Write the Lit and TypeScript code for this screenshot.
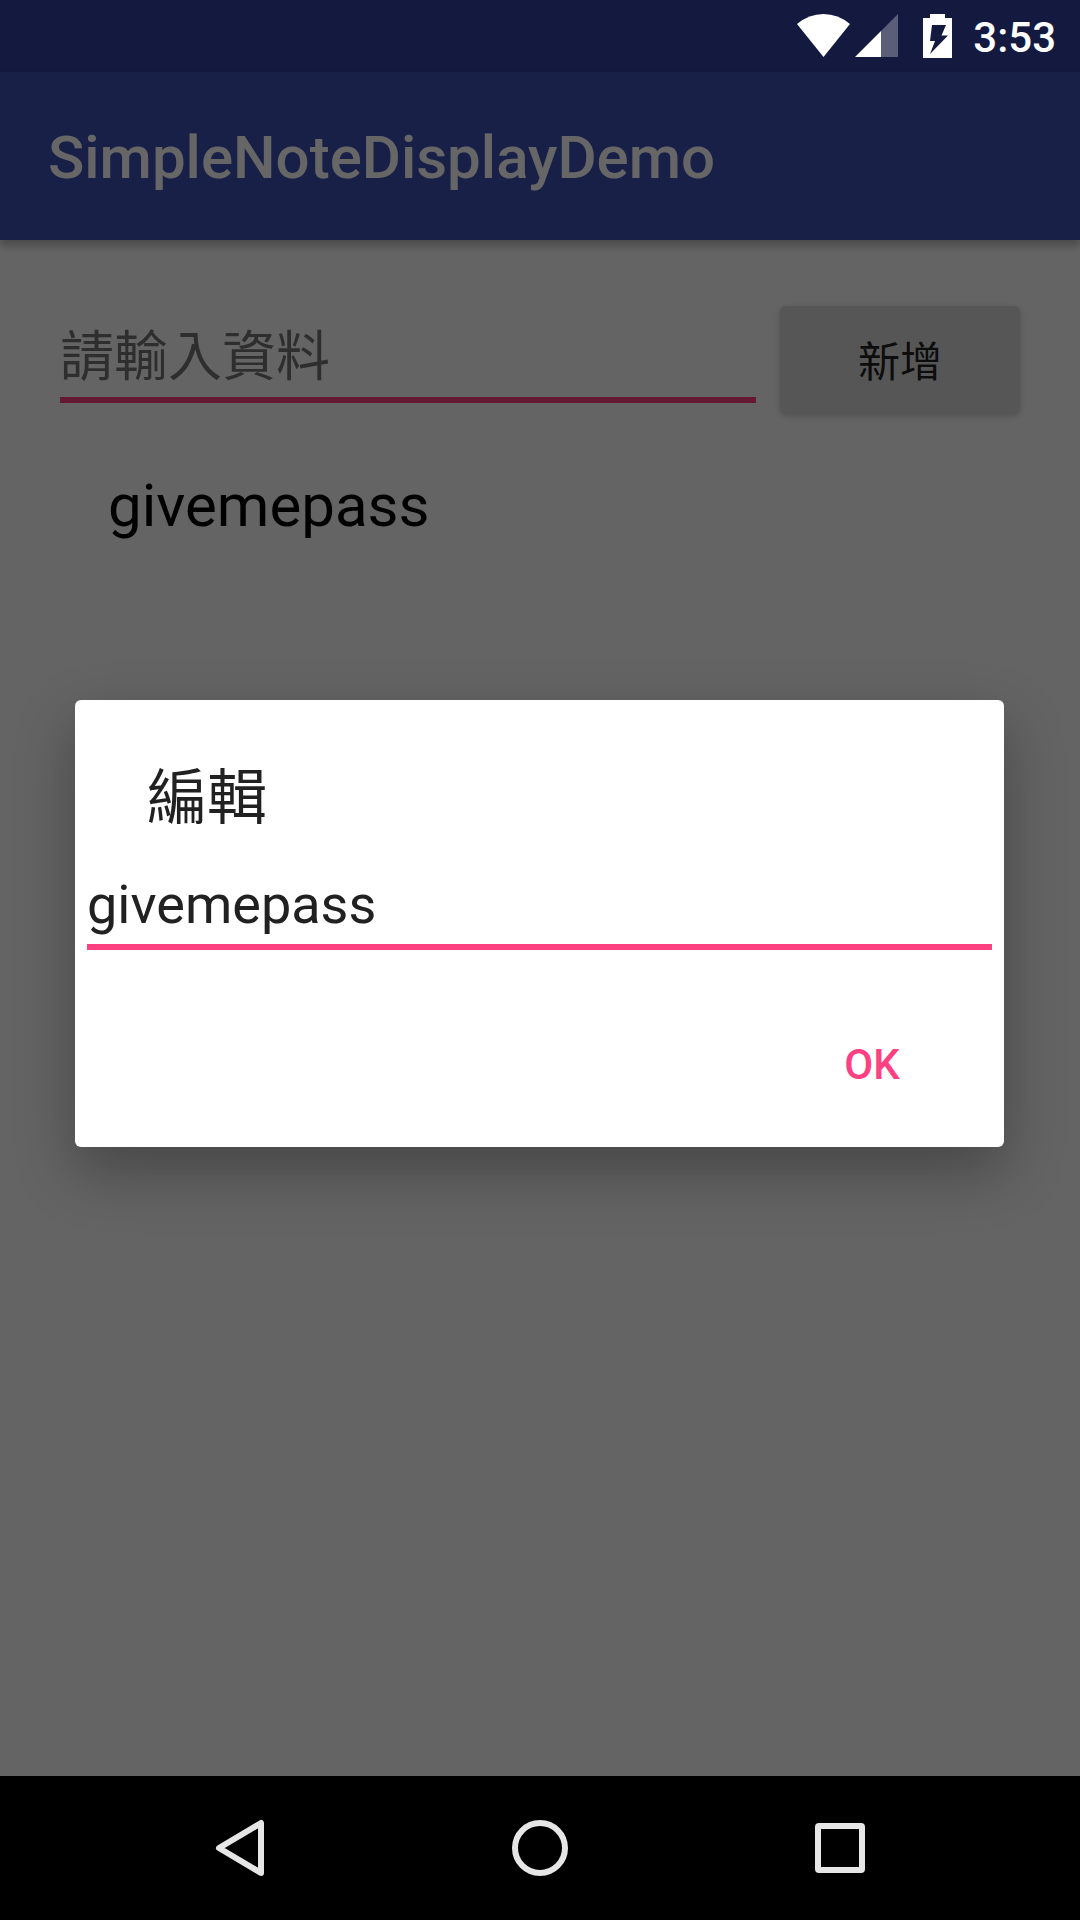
import { LitElement, html, css } from "lit";
import { customElement, state } from "lit/decorators.js";

@customElement("app-root")
export class AppRoot extends LitElement {
  @state() private notes = ["givemepass"];
  @state() private draft = "";

  static styles = css`
    :host {
      display: block;
      font-family: Roboto, "Noto Sans CJK TC", sans-serif;
      color: #000;
    }
    * {
      box-sizing: border-box;
    }
    .screen {
      display: flex;
      flex-direction: column;
      min-height: 100vh;
      background: #fafafa;
    }
    .stage {
      position: relative;
      flex: 1;
      display: flex;
      flex-direction: column;
    }
    .status {
      display: flex;
      justify-content: flex-end;
      align-items: center;
      height: 72px;
      padding-right: 24px;
      background: #303f9f;
    }
    .indicators {
      position: relative;
      z-index: 2;
      display: flex;
      align-items: center;
      gap: 2px;
      color: #fff;
      font-size: 42px;
      font-weight: 500;
      line-height: 48px;
    }
    .indicators svg {
      display: block;
      height: 48px;
    }
    .clock {
      padding-top: 4px;
    }
    .appbar {
      display: flex;
      align-items: center;
      height: 168px;
      padding: 4px 48px 0;
      background: #3f51b5;
      box-shadow: 0 6px 8px rgba(0, 0, 0, 0.26);
    }
    .appbar h1 {
      margin: 0;
      color: #fff;
      font-size: 60px;
      font-weight: 500;
      line-height: 72px;
    }
    .content {
      padding: 66px 60px;
    }
    .entry {
      display: flex;
      align-items: center;
      gap: 24px;
    }
    .field {
      display: block;
      flex: 1;
      width: 100%;
      min-width: 0;
      height: 86px;
      margin: 0;
      padding: 0;
      border: 0;
      border-bottom: 6px solid #ff4081;
      border-radius: 0;
      outline: 0;
      background: none;
      font: inherit;
      font-size: 54px;
      color: #212121;
    }
    .field::placeholder {
      color: rgba(0, 0, 0, 0.54);
      opacity: 1;
    }
    button {
      margin: 0;
      padding: 0;
      border: 0;
      font: inherit;
      font-size: 42px;
    }
    .add {
      width: 240px;
      height: 108px;
      padding-bottom: 4px;
      border-radius: 6px;
      background: #d6d7d7;
      color: rgba(0, 0, 0, 0.87);
      box-shadow: 0 2px 6px rgba(0, 0, 0, 0.2);
    }
    .notes {
      margin: 0;
      padding: 56px 48px;
      list-style: none;
      font-size: 60px;
      line-height: 72px;
    }
    .scrim {
      position: absolute;
      inset: 0;
      z-index: 1;
      display: flex;
      align-items: center;
      padding: 71px 76px 0 75px;
      background: rgba(0, 0, 0, 0.6);
    }
    .dialog {
      flex: 1;
      padding: 54px 12px 29px;
      border-radius: 6px;
      background: #fff;
      box-shadow: 0 24px 60px rgba(0, 0, 0, 0.3);
    }
    .dialog h2 {
      margin: 0 0 20px;
      padding: 0 60px;
      color: #212121;
      font-size: 60px;
      font-weight: 400;
      line-height: 90px;
    }
    .actions {
      display: flex;
      justify-content: flex-end;
      padding: 60px 24px 0;
    }
    .ok {
      width: 192px;
      height: 108px;
      background: none;
      color: #ff4081;
      font-weight: 500;
    }
    .nav {
      display: flex;
      justify-content: center;
      align-items: center;
      gap: 156px;
      height: 144px;
      background: #000;
    }
    .nav button {
      width: 144px;
      height: 144px;
      display: grid;
      place-items: center;
      background: none;
    }
    .nav svg {
      width: 60px;
      height: 60px;
      fill: none;
      stroke: #e6e6e6;
      stroke-width: 6;
      stroke-linejoin: round;
    }
  `;

  private addNote() {
    if (this.draft) this.notes = [...this.notes, this.draft];
    this.draft = "";
  }

  private onDraft(e: Event) {
    this.draft = (e.target as HTMLInputElement).value;
  }

  render() {
    return html`
      <div class="screen">
        <div class="stage">
          <header class="status">
            <div class="indicators">
              <svg width="174" viewBox="0 0 174 48" aria-hidden="true">
                <path
                  fill="#fff"
                  d="M0 12Q12 2 26.500 2T53 12L26.500 45Z"
                />
                <path fill="#fff" fill-opacity=".3" d="M101 2V45H84V19Z" />
                <path fill="#fff" d="M58 45L84 19V45Z" />
                <path
                  fill="#fff"
                  fill-rule="evenodd"
                  d="M133 2H148V6H155V46H126V6H133ZM135 13L133 29H138L133 42L151 23.500H144.500L149 13Z"
                />
              </svg>
              <span class="clock">3:53</span>
            </div>
          </header>
          <div class="appbar"><h1>SimpleNoteDisplayDemo</h1></div>
          <main class="content">
            <div class="entry">
              <input
                class="field"
                type="text"
                aria-label="請輸入資料"
                placeholder="請輸入資料"
                .value=${this.draft}
                @input=${this.onDraft}
              />
              <button class="add" type="button" @click=${this.addNote}>新增</button>
            </div>
            <ul class="notes">
              ${this.notes.map((note) => html`<li>${note}</li>`)}
            </ul>
          </main>
          <div class="scrim">
            <section class="dialog" role="dialog" aria-modal="true" aria-labelledby="edit-title">
              <h2 id="edit-title">編輯</h2>
              <input
                class="field"
                type="text"
                aria-labelledby="edit-title"
                .value=${this.notes[0]}
              />
              <div class="actions">
                <button class="ok" type="button">OK</button>
              </div>
            </section>
          </div>
        </div>
        <nav class="nav">
          <button type="button" aria-label="Back">
            <svg viewBox="0 0 60 60"><path d="M51 5V55L9 30Z" /></svg>
          </button>
          <button type="button" aria-label="Home">
            <svg viewBox="0 0 60 60"><circle cx="30" cy="30" r="25" /></svg>
          </button>
          <button type="button" aria-label="Recent apps">
            <svg viewBox="0 0 60 60"><rect x="8" y="8" width="44" height="44" rx="1" /></svg>
          </button>
        </nav>
      </div>
    `;
  }
}
